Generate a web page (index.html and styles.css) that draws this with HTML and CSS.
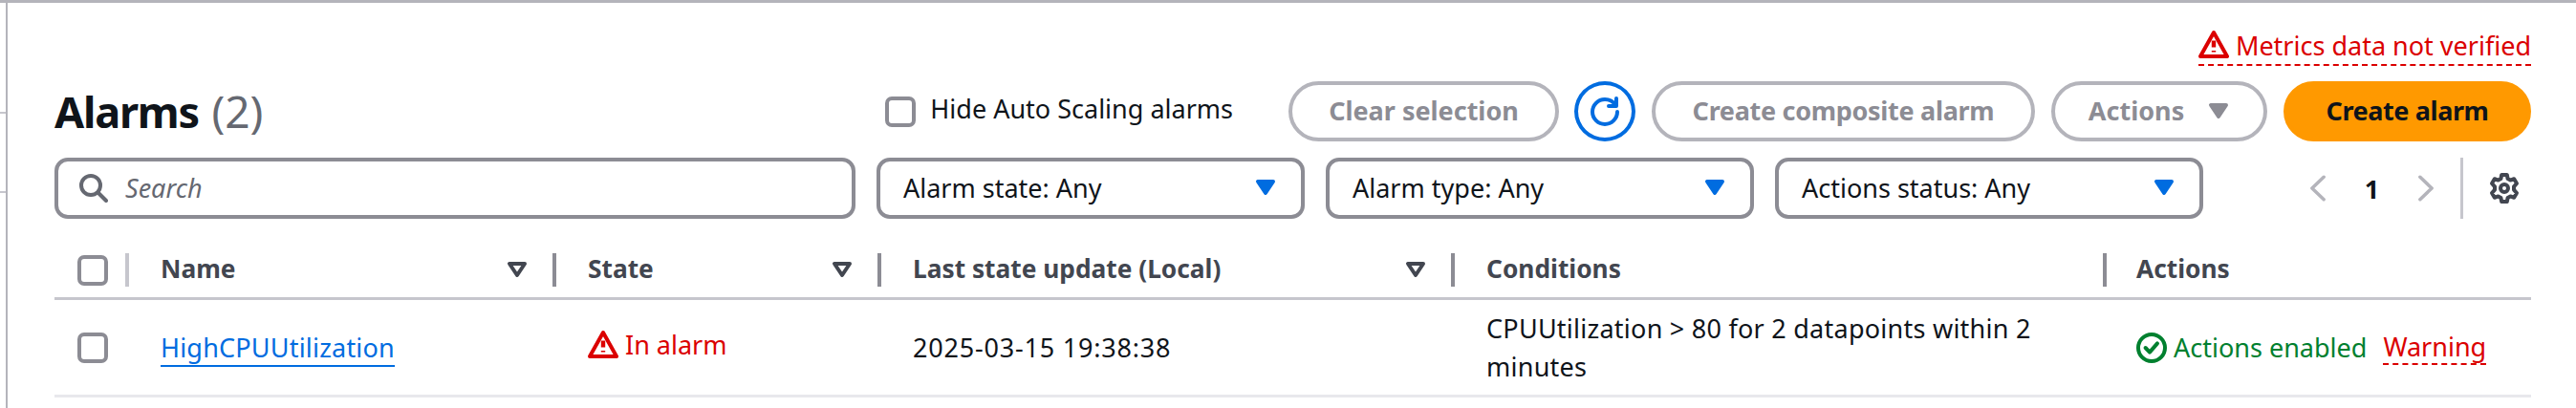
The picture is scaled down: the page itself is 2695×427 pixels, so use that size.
FILE: index.html
```html
<!DOCTYPE html>
<html lang="en">
<head>
  <meta charset="UTF-8">
  <meta name="viewport" content="width=device-width, initial-scale=1.0">
  <title>Alarms</title>
  <link rel="stylesheet" href="styles.css">
</head>
<body>

<div class="page">
  <div class="sidebar">
    <div class="stub stub-one"></div>
    <div class="stub stub-two"></div>
  </div>

  <div class="main">
    <div class="notice-row">
      <span class="notice">
        <svg class="icon" viewBox="0 0 16 16"><path d="M8 1.5 15 14H1L8 1.5Z"/><path class="mark" d="M8 5.8v3.4M8 11v.8"/></svg>
        Metrics data not verified
      </span>
    </div>

    <div class="title-row">
      <h1>Alarms <span class="counter">(2)</span></h1>
      <label class="hide-check"><span class="checkbox"></span><span class="hide-text">Hide Auto Scaling alarms</span></label>
      <button class="btn btn-clear">Clear selection</button>
      <button class="btn-refresh">
        <svg class="icon" viewBox="0 0 16 16"><path d="M14.5 8A6.5 6.5 0 1 1 8 1.5c2.4 0 4.4 1.2 5.5 3"/><path d="M14 1v4h-4"/></svg>
      </button>
      <button class="btn btn-composite">Create composite alarm</button>
      <button class="btn btn-actions">Actions
        <svg class="icon caret" viewBox="0 0 16 16"><path d="M4 5h8l-4 6-4-6Z"/></svg>
      </button>
      <button class="btn btn-primary">Create alarm</button>
    </div>

    <div class="filter-row">
      <div class="field search">
        <svg class="icon" viewBox="0 0 16 16"><circle cx="7" cy="7" r="5"/><path d="m11 11 4 4"/></svg>
        <span>Search</span>
      </div>
      <div class="field select select-state">Alarm state: Any
        <svg class="icon caret" viewBox="0 0 16 16"><path d="M4 5h8l-4 6-4-6Z"/></svg>
      </div>
      <div class="field select select-type">Alarm type: Any
        <svg class="icon caret" viewBox="0 0 16 16"><path d="M4 5h8l-4 6-4-6Z"/></svg>
      </div>
      <div class="field select select-status">Actions status: Any
        <svg class="icon caret" viewBox="0 0 16 16"><path d="M4 5h8l-4 6-4-6Z"/></svg>
      </div>
      <div class="pager">
        <svg class="icon" viewBox="0 0 16 16"><path d="M11.5 1.3 4.5 8l7 6.7"/></svg>
        <span class="page-num">1</span>
        <svg class="icon" viewBox="0 0 16 16"><path d="m4.5 1.3 7 6.7-7 6.7"/></svg>
      </div>
      <div class="settings">
        <svg class="icon" viewBox="0 0 16 16"><path d="M6.6 1h2.8l.4 2 1.4.8 1.9-.7 1.4 2.4L13 7.2v1.6l1.5 1.7-1.4 2.4-1.9-.7-1.4.8-.4 2H6.6l-.4-2-1.4-.8-1.9.7-1.4-2.4L3 8.8V7.2L1.5 5.5l1.4-2.4 1.9.7 1.4-.8.4-2Z"/><circle cx="8" cy="8" r="2"/></svg>
      </div>
    </div>

    <table class="alarms">
      <colgroup>
        <col class="col-select"><col class="col-name"><col class="col-state">
        <col class="col-update"><col class="col-cond"><col class="col-actions">
      </colgroup>
      <thead>
        <tr>
          <th><div class="head-select"><span class="checkbox"></span></div></th>
          <th><div class="head head-light">Name <svg class="icon sort" viewBox="0 0 16 16"><path d="M4 5h8l-4 6-4-6Z"/></svg></div></th>
          <th><div class="head">State <svg class="icon sort" viewBox="0 0 16 16"><path d="M4 5h8l-4 6-4-6Z"/></svg></div></th>
          <th><div class="head">Last state update (Local) <svg class="icon sort" viewBox="0 0 16 16"><path d="M4 5h8l-4 6-4-6Z"/></svg></div></th>
          <th><div class="head">Conditions</div></th>
          <th><div class="head head-last">Actions</div></th>
        </tr>
      </thead>
      <tbody>
        <tr>
          <td class="cell-select"><span class="checkbox"></span></td>
          <td><a href="#" class="alarm-link">HighCPUUtilization</a></td>
          <td>
            <span class="status-alarm">
              <svg class="icon" viewBox="0 0 16 16"><path d="M8 1.5 15 14H1L8 1.5Z"/><path class="mark" d="M8 5.8v3.4M8 11v.8"/></svg>
              In alarm
            </span>
          </td>
          <td class="cell-date">2025-03-15 19:38:38</td>
          <td class="cell-cond">CPUUtilization &gt; 80 for 2 datapoints within 2 minutes</td>
          <td class="cell-actions">
            <div class="action-cell">
              <span class="status-ok">
                <svg class="icon" viewBox="0 0 16 16"><circle cx="8" cy="8" r="7"/><path d="m4.8 8 2.2 2.3 4-4.6"/></svg>
                Actions enabled
              </span>
              <span class="warning">Warning</span>
            </div>
          </td>
        </tr>
      </tbody>
    </table>
  </div>
</div>

</body>
</html>
```
FILE: styles.css
```css
* {
  box-sizing: border-box;
}
html, body {
  margin: 0;
  height: 427px;
  overflow: hidden;
  background: #ffffff;
}
body {
  color: #0f141a;
  font-family: "Noto Sans", sans-serif;
  font-size: 27px;
  line-height: 35px;
}
.page {
  display: flex;
  height: 427px;
  border-top: 3px solid #b4b4bb;
}
.sidebar {
  width: 6px;
  flex: none;
}
.stub {
  border-bottom: 2px solid #c6c6cd;
}
.stub-one {
  height: 116px;
}
.stub-two {
  height: 83px;
}
.main {
  flex: 1;
  min-width: 0;
  border-left: 2px solid #b4b4bb;
  padding: 0 47px 0 49px;
}
.icon {
  width: 28px;
  height: 28px;
  flex: none;
  fill: none;
  stroke: currentColor;
  stroke-width: 2;
  stroke-linecap: round;
  stroke-linejoin: round;
}
.mark {
  stroke-width: 2.2;
  stroke-linecap: butt;
}

/* notice */
.notice-row {
  display: flex;
  justify-content: flex-end;
  height: 82px;
  padding-top: 27px;
}
.notice {
  display: flex;
  align-items: center;
  gap: 7px;
  height: 39px;
  padding-bottom: 3px;
  color: #db0000;
  border-bottom: 2px dashed #db0000;
}
.notice .icon {
  width: 32px;
  height: 32px;
}

/* title row */
.title-row {
  display: flex;
  align-items: center;
  height: 63px;
}
h1 {
  margin: 0;
  margin-right: auto;
  font-size: 45px;
  line-height: 63px;
  font-weight: 700;
  letter-spacing: -1.2px;
}
.counter {
  margin-left: 3px;
  color: #656871;
  font-size: 46px;
  font-weight: 400;
  letter-spacing: 0;
}
.checkbox {
  display: block;
  width: 32px;
  height: 32px;
  flex: none;
  border: 4px solid #8c8c94;
  border-radius: 7px;
  background: #ffffff;
}
.hide-check {
  display: flex;
  align-items: center;
  gap: 15px;
  margin-right: 58px;
}
.hide-text {
  padding-bottom: 6px;
}
.btn {
  height: 63px;
  border: 4px solid #b4b4bb;
  border-radius: 32px;
  background: #ffffff;
  color: #8c8c94;
  font-family: inherit;
  font-size: 27px;
  font-weight: 700;
  padding: 0 0 2px;
}
.btn-clear {
  width: 283px;
}
.btn-refresh {
  display: flex;
  align-items: center;
  justify-content: center;
  width: 64px;
  height: 63px;
  margin: 0 17px 0 16px;
  padding: 0;
  border: 4px solid #006ce0;
  border-radius: 50%;
  background: #ffffff;
  color: #006ce0;
}
.btn-refresh .icon {
  width: 32px;
  height: 32px;
}
.btn-composite {
  width: 401px;
  margin-right: 17px;
  letter-spacing: -0.3px;
}
.btn-actions {
  display: flex;
  align-items: center;
  justify-content: center;
  gap: 20px;
  width: 226px;
  margin-right: 17px;
  padding-left: 4px;
}
.btn-primary {
  width: 259px;
  border-color: #ff9900;
  background: #ff9900;
  color: #0f141a;
  letter-spacing: -0.4px;
}
.caret {
  fill: currentColor;
}
.btn .caret {
  width: 32px;
  height: 32px;
}

/* filters */
.filter-row {
  display: flex;
  align-items: center;
  height: 64px;
  margin-top: 17px;
}
.field {
  display: flex;
  align-items: center;
  height: 64px;
  padding-bottom: 2px;
  border: 4px solid #8c8c94;
  border-radius: 14px;
  background: #ffffff;
}
.search {
  width: 838px;
  gap: 18px;
  padding-left: 20px;
  margin-right: 22px;
  color: #656871;
  font-style: italic;
}
.search .icon {
  width: 32px;
  height: 32px;
}
.select {
  justify-content: space-between;
  width: 448px;
  margin-right: 22px;
  padding-left: 24px;
  padding-right: 21px;
}
.select .caret {
  color: #006ce0;
  width: 32px;
  height: 32px;
}
.select-status {
  margin-right: 0;
}
.pager {
  display: flex;
  align-items: center;
  justify-content: space-between;
  width: 141px;
  margin-left: 106px;
  color: #b4b4bb;
}
.page-num {
  color: #0f141a;
  font-weight: 700;
}
.settings {
  display: flex;
  align-items: center;
  height: 64px;
  margin-left: 22px;
  padding-left: 27px;
  border-left: 3px solid #c6c6cd;
  color: #424650;
}
.settings .icon {
  width: 32px;
  height: 32px;
}

/* table */
.alarms {
  width: 2591px;
  margin-top: 36px;
  border-collapse: collapse;
  table-layout: fixed;
}
.col-select { width: 74px; }
.col-name { width: 447px; }
.col-state { width: 340px; }
.col-update { width: 600px; }
.col-cond { width: 682px; }
.col-actions { width: 448px; }
th {
  padding: 0 0 11px;
  border-bottom: 3px solid #c6c6cd;
  font-size: 26.3px;
  font-weight: 700;
  text-align: left;
  color: #424650;
}
.head-select {
  padding-left: 24px;
}
.head {
  display: flex;
  align-items: center;
  justify-content: space-between;
  height: 35px;
  padding: 0 21px 2px 33px;
  border-left: 4px solid #8c8c94;
}
.head-light {
  border-left-color: #c6c6cd;
}
.head-last {
  padding-left: 31px;
}
.sort {
  width: 32px;
  height: 32px;
}
td {
  height: 102px;
  padding: 0 0 0 37px;
  border-bottom: 3px solid #e8e8ec;
  line-height: 40px;
  vertical-align: middle;
}
td.cell-select {
  padding: 0 0 0 24px;
}
td.cell-date {
  letter-spacing: 0.8px;
}
td.cell-cond {
  padding-right: 75px;
  letter-spacing: 0.25px;
}
td.cell-actions {
  padding-left: 35px;
}
.alarm-link {
  color: #006ce0;
  text-decoration: none;
  letter-spacing: 0.2px;
  border-bottom: 2px solid #006ce0;
}
.status-alarm,
.status-ok {
  display: inline-flex;
  align-items: center;
  gap: 7px;
}
.status-alarm {
  color: #db0000;
}
.status-alarm .icon,
.status-ok .icon {
  width: 32px;
  height: 32px;
}
.status-ok {
  color: #00802f;
}
.action-cell {
  display: flex;
  align-items: center;
  gap: 17px;
}
.warning {
  color: #db0000;
  line-height: 35px;
  border-bottom: 2px dashed #db0000;
}
```
